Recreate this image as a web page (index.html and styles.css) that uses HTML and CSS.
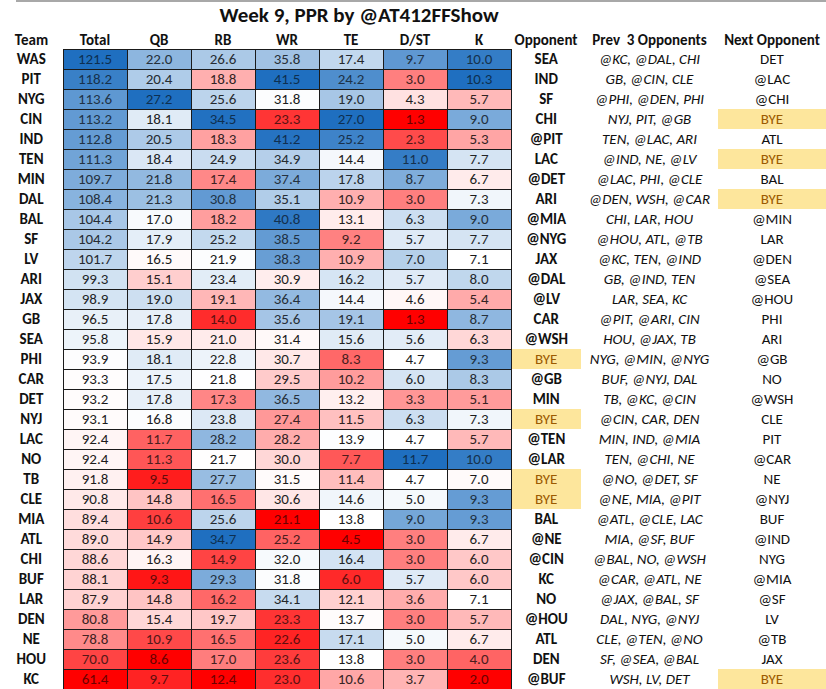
FILE: index.html
```html
<!DOCTYPE html>
<html>
<head>
<meta charset="utf-8">
<link rel="stylesheet" href="styles.css">
</head>
<body>
<div class="topline"></div>
<table class="sheet">
<colgroup>
<col class="c-team"><col class="c-num"><col class="c-num"><col class="c-num"><col class="c-num"><col class="c-num"><col class="c-num"><col class="c-num"><col class="c-opp"><col class="c-prev"><col class="c-next">
</colgroup>
<thead>
<tr class="title-row"><th colspan="10" class="title">Week 9, PPR by @AT412FFShow</th><th></th></tr>
<tr class="head-row"><th>Team</th><th>Total</th><th>QB</th><th>RB</th><th>WR</th><th>TE</th><th>D/ST</th><th>K</th><th>Opponent</th><th>Prev&nbsp; 3 Opponents</th><th>Next Opponent</th></tr>
</thead>
<tbody id="rows">
<tr><td class="team">WAS</td><td class="n">121.5</td><td class="n">22.0</td><td class="n">26.6</td><td class="n">35.8</td><td class="n">17.4</td><td class="n">9.7</td><td class="n">10.0</td><td class="opp">SEA</td><td class="prev">@KC, @DAL, CHI</td><td class="next">DET</td></tr>
<tr><td class="team">PIT</td><td class="n">118.2</td><td class="n">20.4</td><td class="n">18.8</td><td class="n">41.5</td><td class="n">24.2</td><td class="n">3.0</td><td class="n">10.3</td><td class="opp">IND</td><td class="prev">GB, @CIN, CLE</td><td class="next">@LAC</td></tr>
<tr><td class="team">NYG</td><td class="n">113.6</td><td class="n">27.2</td><td class="n">25.6</td><td class="n">31.8</td><td class="n">19.0</td><td class="n">4.3</td><td class="n">5.7</td><td class="opp">SF</td><td class="prev">@PHI, @DEN, PHI</td><td class="next">@CHI</td></tr>
<tr><td class="team">CIN</td><td class="n">113.2</td><td class="n">18.1</td><td class="n">34.5</td><td class="n">23.3</td><td class="n">27.0</td><td class="n">1.3</td><td class="n">9.0</td><td class="opp">CHI</td><td class="prev">NYJ, PIT, @GB</td><td class="next bye">BYE</td></tr>
<tr><td class="team">IND</td><td class="n">112.8</td><td class="n">20.5</td><td class="n">18.3</td><td class="n">41.2</td><td class="n">25.2</td><td class="n">2.3</td><td class="n">5.3</td><td class="opp">@PIT</td><td class="prev">TEN, @LAC, ARI</td><td class="next">ATL</td></tr>
<tr><td class="team">TEN</td><td class="n">111.3</td><td class="n">18.4</td><td class="n">24.9</td><td class="n">34.9</td><td class="n">14.4</td><td class="n">11.0</td><td class="n">7.7</td><td class="opp">LAC</td><td class="prev">@IND, NE, @LV</td><td class="next bye">BYE</td></tr>
<tr><td class="team">MIN</td><td class="n">109.7</td><td class="n">21.8</td><td class="n">17.4</td><td class="n">37.4</td><td class="n">17.8</td><td class="n">8.7</td><td class="n">6.7</td><td class="opp">@DET</td><td class="prev">@LAC, PHI, @CLE</td><td class="next">BAL</td></tr>
<tr><td class="team">DAL</td><td class="n">108.4</td><td class="n">21.3</td><td class="n">30.8</td><td class="n">35.1</td><td class="n">10.9</td><td class="n">3.0</td><td class="n">7.3</td><td class="opp">ARI</td><td class="prev">@DEN, WSH, @CAR</td><td class="next bye">BYE</td></tr>
<tr><td class="team">BAL</td><td class="n">104.4</td><td class="n">17.0</td><td class="n">18.2</td><td class="n">40.8</td><td class="n">13.1</td><td class="n">6.3</td><td class="n">9.0</td><td class="opp">@MIA</td><td class="prev">CHI, LAR, HOU</td><td class="next">@MIN</td></tr>
<tr><td class="team">SF</td><td class="n">104.2</td><td class="n">17.9</td><td class="n">25.2</td><td class="n">38.5</td><td class="n">9.2</td><td class="n">5.7</td><td class="n">7.7</td><td class="opp">@NYG</td><td class="prev">@HOU, ATL, @TB</td><td class="next">LAR</td></tr>
<tr><td class="team">LV</td><td class="n">101.7</td><td class="n">16.5</td><td class="n">21.9</td><td class="n">38.3</td><td class="n">10.9</td><td class="n">7.0</td><td class="n">7.1</td><td class="opp">JAX</td><td class="prev">@KC, TEN, @IND</td><td class="next">@DEN</td></tr>
<tr><td class="team">ARI</td><td class="n">99.3</td><td class="n">15.1</td><td class="n">23.4</td><td class="n">30.9</td><td class="n">16.2</td><td class="n">5.7</td><td class="n">8.0</td><td class="opp">@DAL</td><td class="prev">GB, @IND, TEN</td><td class="next">@SEA</td></tr>
<tr><td class="team">JAX</td><td class="n">98.9</td><td class="n">19.0</td><td class="n">19.1</td><td class="n">36.4</td><td class="n">14.4</td><td class="n">4.6</td><td class="n">5.4</td><td class="opp">@LV</td><td class="prev">LAR, SEA, KC</td><td class="next">@HOU</td></tr>
<tr><td class="team">GB</td><td class="n">96.5</td><td class="n">17.8</td><td class="n">14.0</td><td class="n">35.6</td><td class="n">19.1</td><td class="n">1.3</td><td class="n">8.7</td><td class="opp">CAR</td><td class="prev">@PIT, @ARI, CIN</td><td class="next">PHI</td></tr>
<tr><td class="team">SEA</td><td class="n">95.8</td><td class="n">15.9</td><td class="n">21.0</td><td class="n">31.4</td><td class="n">15.6</td><td class="n">5.6</td><td class="n">6.3</td><td class="opp">@WSH</td><td class="prev">HOU, @JAX, TB</td><td class="next">ARI</td></tr>
<tr><td class="team">PHI</td><td class="n">93.9</td><td class="n">18.1</td><td class="n">22.8</td><td class="n">30.7</td><td class="n">8.3</td><td class="n">4.7</td><td class="n">9.3</td><td class="opp bye">BYE</td><td class="prev">NYG, @MIN, @NYG</td><td class="next">@GB</td></tr>
<tr><td class="team">CAR</td><td class="n">93.3</td><td class="n">17.5</td><td class="n">21.8</td><td class="n">29.5</td><td class="n">10.2</td><td class="n">6.0</td><td class="n">8.3</td><td class="opp">@GB</td><td class="prev">BUF, @NYJ, DAL</td><td class="next">NO</td></tr>
<tr><td class="team">DET</td><td class="n">93.2</td><td class="n">17.8</td><td class="n">17.3</td><td class="n">36.5</td><td class="n">13.2</td><td class="n">3.3</td><td class="n">5.1</td><td class="opp">MIN</td><td class="prev">TB, @KC, @CIN</td><td class="next">@WSH</td></tr>
<tr><td class="team">NYJ</td><td class="n">93.1</td><td class="n">16.8</td><td class="n">23.8</td><td class="n">27.4</td><td class="n">11.5</td><td class="n">6.3</td><td class="n">7.3</td><td class="opp bye">BYE</td><td class="prev">@CIN, CAR, DEN</td><td class="next">CLE</td></tr>
<tr><td class="team">LAC</td><td class="n">92.4</td><td class="n">11.7</td><td class="n">28.2</td><td class="n">28.2</td><td class="n">13.9</td><td class="n">4.7</td><td class="n">5.7</td><td class="opp">@TEN</td><td class="prev">MIN, IND, @MIA</td><td class="next">PIT</td></tr>
<tr><td class="team">NO</td><td class="n">92.4</td><td class="n">11.3</td><td class="n">21.7</td><td class="n">30.0</td><td class="n">7.7</td><td class="n">11.7</td><td class="n">10.0</td><td class="opp">@LAR</td><td class="prev">TEN, @CHI, NE</td><td class="next">@CAR</td></tr>
<tr><td class="team">TB</td><td class="n">91.8</td><td class="n">9.5</td><td class="n">27.7</td><td class="n">31.5</td><td class="n">11.4</td><td class="n">4.7</td><td class="n">7.0</td><td class="opp bye">BYE</td><td class="prev">@NO, @DET, SF</td><td class="next">NE</td></tr>
<tr><td class="team">CLE</td><td class="n">90.8</td><td class="n">14.8</td><td class="n">16.5</td><td class="n">30.6</td><td class="n">14.6</td><td class="n">5.0</td><td class="n">9.3</td><td class="opp bye">BYE</td><td class="prev">@NE, MIA, @PIT</td><td class="next">@NYJ</td></tr>
<tr><td class="team">MIA</td><td class="n">89.4</td><td class="n">10.6</td><td class="n">25.6</td><td class="n">21.1</td><td class="n">13.8</td><td class="n">9.0</td><td class="n">9.3</td><td class="opp">BAL</td><td class="prev">@ATL, @CLE, LAC</td><td class="next">BUF</td></tr>
<tr><td class="team">ATL</td><td class="n">89.0</td><td class="n">14.9</td><td class="n">34.7</td><td class="n">25.2</td><td class="n">4.5</td><td class="n">3.0</td><td class="n">6.7</td><td class="opp">@NE</td><td class="prev">MIA, @SF, BUF</td><td class="next">@IND</td></tr>
<tr><td class="team">CHI</td><td class="n">88.6</td><td class="n">16.3</td><td class="n">14.9</td><td class="n">32.0</td><td class="n">16.4</td><td class="n">3.0</td><td class="n">6.0</td><td class="opp">@CIN</td><td class="prev">@BAL, NO, @WSH</td><td class="next">NYG</td></tr>
<tr><td class="team">BUF</td><td class="n">88.1</td><td class="n">9.3</td><td class="n">29.3</td><td class="n">31.8</td><td class="n">6.0</td><td class="n">5.7</td><td class="n">6.0</td><td class="opp">KC</td><td class="prev">@CAR, @ATL, NE</td><td class="next">@MIA</td></tr>
<tr><td class="team">LAR</td><td class="n">87.9</td><td class="n">14.8</td><td class="n">16.2</td><td class="n">34.1</td><td class="n">12.1</td><td class="n">3.6</td><td class="n">7.1</td><td class="opp">NO</td><td class="prev">@JAX, @BAL, SF</td><td class="next">@SF</td></tr>
<tr><td class="team">DEN</td><td class="n">80.8</td><td class="n">15.4</td><td class="n">19.7</td><td class="n">23.3</td><td class="n">13.7</td><td class="n">3.0</td><td class="n">5.7</td><td class="opp">@HOU</td><td class="prev">DAL, NYG, @NYJ</td><td class="next">LV</td></tr>
<tr><td class="team">NE</td><td class="n">78.8</td><td class="n">10.9</td><td class="n">16.5</td><td class="n">22.6</td><td class="n">17.1</td><td class="n">5.0</td><td class="n">6.7</td><td class="opp">ATL</td><td class="prev">CLE, @TEN, @NO</td><td class="next">@TB</td></tr>
<tr><td class="team">HOU</td><td class="n">70.0</td><td class="n">8.6</td><td class="n">17.0</td><td class="n">23.6</td><td class="n">13.8</td><td class="n">3.0</td><td class="n">4.0</td><td class="opp">DEN</td><td class="prev">SF, @SEA, @BAL</td><td class="next">JAX</td></tr>
<tr><td class="team">KC</td><td class="n">61.4</td><td class="n">9.7</td><td class="n">12.4</td><td class="n">23.0</td><td class="n">10.6</td><td class="n">3.7</td><td class="n">2.0</td><td class="opp">@BUF</td><td class="prev">WSH, LV, DET</td><td class="next bye">BYE</td></tr>
</tbody>
</table>
<script src="app.js"></script>
</body>
</html>
```
FILE: styles.css
```css
html, body {
  margin: 0;
  padding: 0;
  background: #ffffff;
}
body {
  width: 826px;
  height: 689px;
  overflow: hidden;
  font-family: "Carlito", "Lato", "Liberation Sans", sans-serif;
  color: #111;
}
.topline {
  height: 2px;
  margin-left: 16px;
  background: #a8a8a8;
}
.sheet {
  border-collapse: collapse;
  table-layout: fixed;
  width: 826px;
}
.c-team { width: 63px; }
.c-num { width: 64px; }
.c-opp { width: 70px; }
.c-prev { width: 137px; }
.c-next { width: 108px; }
.sheet th, .sheet td {
  padding: 0;
  text-align: center;
  white-space: nowrap;
  overflow: hidden;
  font-size: 15px;
  line-height: 18px;
}
.title-row { height: 27px; }
.sheet .title {
  font-size: 21px;
  font-weight: bold;
  line-height: 24px;
  vertical-align: middle;
  padding-bottom: 1px;
}
.head-row { height: 20px; }
.head-row th {
  font-weight: bold;
  vertical-align: bottom;
  line-height: 18px;
}
#rows tr { height: 20px; }
.team { font-weight: bold; }
.n {
  border: 1px solid #1a1a1a;
}
.opp { font-weight: bold; }
.prev { font-style: italic; }
.bye {
  background: #fde69c;
  color: #9c5a00;
  font-weight: normal;
}
```
FILE: app.js
```js
(function () {
  var rows = document.querySelectorAll('#rows tr');
  var RED = [255, 0, 0], WHITE = [255, 255, 255], BLUE = [31, 111, 192];
  function lerp(a, b, t) {
    return [0, 1, 2].map(function (i) { return Math.round(a[i] + (b[i] - a[i]) * t); });
  }
  for (var c = 1; c <= 7; c++) {
    var cells = [], vals = [];
    rows.forEach(function (r) {
      var td = r.children[c];
      cells.push(td);
      vals.push(parseFloat(td.textContent));
    });
    var s = vals.slice().sort(function (a, b) { return a - b; });
    var min = s[0], max = s[s.length - 1];
    var pos = (s.length - 1) * 0.5, lo = Math.floor(pos), hi = Math.ceil(pos);
    var mid = s[lo] + (s[hi] - s[lo]) * (pos - lo);
    cells.forEach(function (td, i) {
      var v = vals[i], col, str;
      if (v <= mid) {
        var t = mid === min ? 1 : (v - min) / (mid - min);
        col = lerp(RED, WHITE, t); str = 1 - t;
      } else {
        var u = max === mid ? 1 : (v - mid) / (max - mid);
        col = lerp(WHITE, BLUE, u); str = u;
      }
      var k = 0.1 + 0.32 * str;
      td.style.backgroundColor = 'rgb(' + col.join(',') + ')';
      td.style.color = 'rgb(' + col.map(function (x) { return Math.round(x * k); }).join(',') + ')';
    });
  }
})();
```
